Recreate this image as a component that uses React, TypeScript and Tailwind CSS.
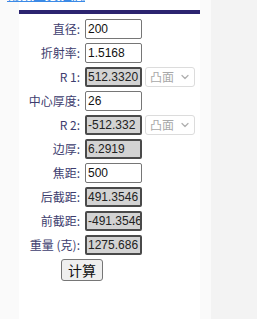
import { ChevronDown } from "lucide-react";

const ROWS = [
  { label: "直径:", value: "200", ro: false },
  { label: "折射率:", value: "1.5168", ro: false },
  { label: "R 1:", value: "512.3320", ro: true, select: true },
  { label: "中心厚度:", value: "26", ro: false },
  { label: "R 2:", value: "-512.332", ro: true, select: true },
  { label: "边厚:", value: "6.2919", ro: true },
  { label: "焦距:", value: "500", ro: false },
  { label: "后截距:", value: "491.3546", ro: true },
  { label: "前截距:", value: "-491.3546", ro: true },
  { label: "重量 (克):", value: "1275.686", ro: true },
];

export default function App() {
  return (
    <div className="flex h-[319px] w-[257px] overflow-hidden bg-[#fafafa]" style={{ fontFamily: "Arial, 'Liberation Sans', 'Noto Sans CJK SC', sans-serif" }}>
      {/* left gutter with the link that scrolled off the top */}
      <div className="relative w-[19px] shrink-0">
        <div className="absolute left-[7px] top-[-13px] whitespace-nowrap text-[13px] leading-[18px] text-[#3b8ae6] underline">常用工具汇总</div>
      </div>

      {/* panel */}
      <div className="flex w-[181px] shrink-0 flex-col bg-white pt-[10px]">
        <div className="h-[4px] bg-[#2c2470]" />
        <div className="mt-[5px] flex flex-col gap-[4px]">
          {ROWS.map((r) => (
            <div key={r.label} className="flex h-[20px] items-center">
              <div className="w-[62px] pr-[1px] text-right text-[12px] text-[#3d3d6e]" style={{ fontFamily: "'Noto Sans CJK SC', sans-serif" }}>
                {r.label}
              </div>
              <div
                className={
                  r.ro
                    ? "ml-[4px] flex h-[20px] w-[57px] items-center overflow-hidden whitespace-nowrap rounded-[2px] border-2 border-[#4a4a4a] bg-[#d3d3d3] pl-[1px] text-[12px] text-[#222]"
                    : "ml-[4px] flex h-[20px] w-[57px] items-center overflow-hidden whitespace-nowrap rounded-[2px] border border-[#767676] bg-white pl-[2px] text-[12px] text-[#111]"
                }
              >
                {r.value}
              </div>
              {r.select && (
                <div className="ml-[3px] flex h-[20px] w-[50px] items-center justify-between rounded-[3px] border border-[#dcdcdc] bg-white pl-[4px] pr-[3px] text-[12px] text-[#a8a8a8]" style={{ fontFamily: "'Noto Sans CJK SC', sans-serif" }}>
                  <span>凸面</span>
                  <ChevronDown size={12} strokeWidth={2.5} className="text-[#b0b0b0]" />
                </div>
              )}
            </div>
          ))}
          <div className="flex h-[22px]">
            <button className="ml-[42px] flex h-[22px] w-[42px] items-center justify-center rounded-[3px] border border-[#767676] bg-[#efefef] text-[14px] text-[#111]" style={{ fontFamily: "'Noto Sans CJK SC', sans-serif" }}>
              计算
            </button>
          </div>
        </div>
      </div>

      <div className="w-[11px] shrink-0" />
      <div className="flex-1 bg-[#f3f3f3]" />
    </div>
  );
}
